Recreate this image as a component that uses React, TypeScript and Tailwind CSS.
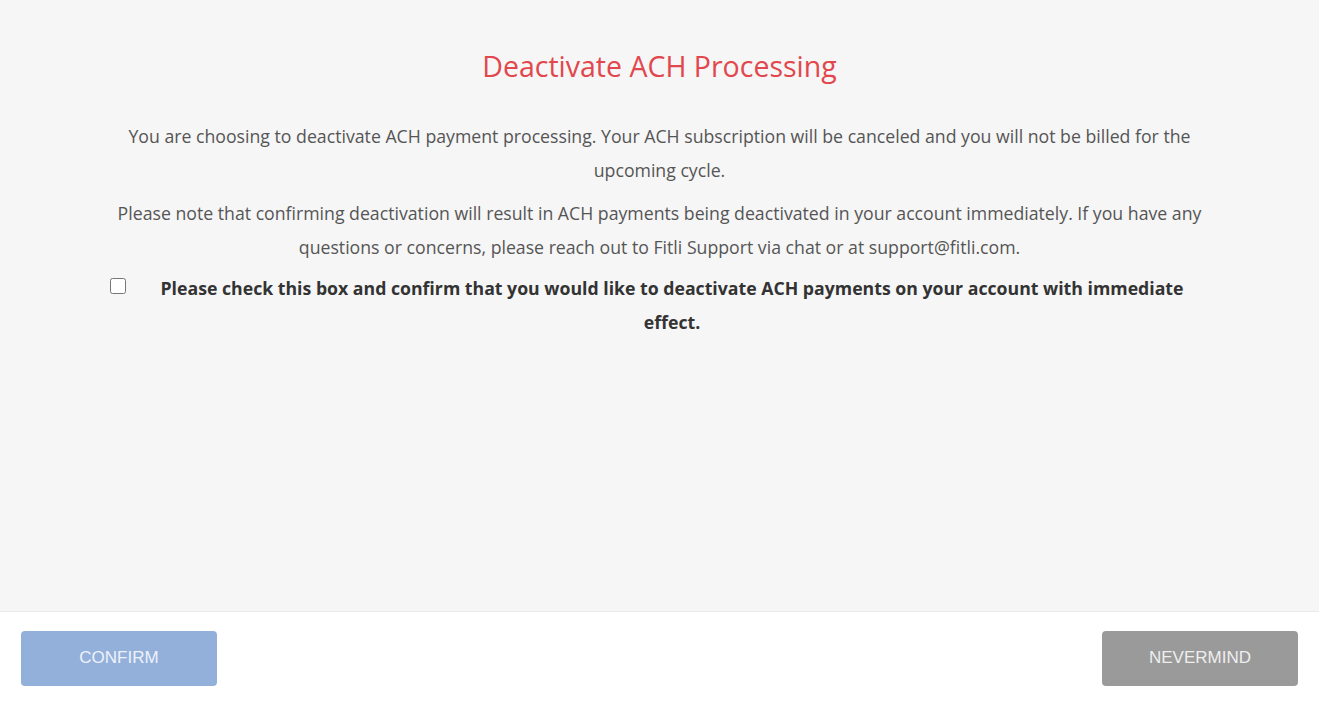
import { useState } from 'react'

export default function App() {
  const [checked, setChecked] = useState(false)

  return (
    <div className="flex h-[704px] w-full flex-col font-['Open_Sans',Arial,sans-serif]">
      <div className="flex-1 bg-[#f6f6f6] px-[110px] pt-[44px]">
        <h1 className="text-center text-[28.5px] leading-[44px] font-normal text-[#e2474d]">
          Deactivate ACH Processing
        </h1>
        <div className="mt-[31px] text-center text-[17.7px] leading-[34px] text-[#555]">
          <p>
            You are choosing to deactivate ACH payment processing. Your ACH subscription will be canceled and you will
            not be billed for the upcoming cycle.
          </p>
          <p className="mt-[9px]">
            Please note that confirming deactivation will result in ACH payments being deactivated in your account
            immediately. If you have any questions or concerns, please reach out to Fitli Support via chat or at
            support@fitli.com.
          </p>
        </div>
        <label className="mt-[7px] flex items-start gap-[9px]">
          <input
            type="checkbox"
            checked={checked}
            onChange={(e) => setChecked(e.target.checked)}
            className="mt-[7px] h-[16px] w-[16px] shrink-0 rounded-[3px] border border-[#888] accent-[#5b7fc0]"
          />
          <span className="flex-1 text-center text-[17.7px] leading-[34px] font-bold text-[#333]">
            Please check this box and confirm that you would like to deactivate ACH payments on your account with
            immediate effect.
          </span>
        </label>
      </div>
      <div className="flex h-[93px] items-center justify-between border-t border-[#ebebeb] bg-white px-[21px] font-['Liberation_Sans',Arial,sans-serif]">
        <button
          disabled={!checked}
          className="h-[55px] w-[196px] rounded-[4px] bg-[#93b0da] text-[17px] uppercase text-[#eef2fa]"
        >
          Confirm
        </button>
        <button className="h-[55px] w-[196px] rounded-[4px] bg-[#9a9a9a] text-[17px] uppercase text-[#eeeeee]">
          Nevermind
        </button>
      </div>
    </div>
  )
}
